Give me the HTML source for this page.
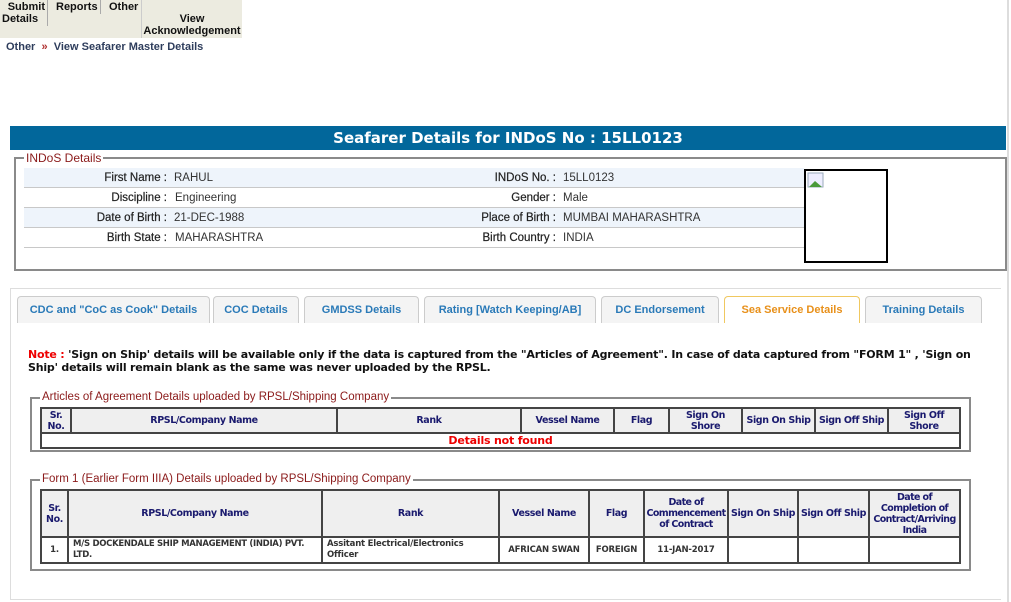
<!DOCTYPE html>
<html><head><meta charset="utf-8"><style>
*{box-sizing:border-box;margin:0;padding:0}
body{width:1011px;height:602px;background:#fff;position:relative;overflow:hidden;font-family:"Liberation Sans",Arial,sans-serif}
.a{position:absolute}
.menu{left:0;top:0;width:242px;height:38px;background:#ecebe0}
.mi{position:absolute;font:bold 11px "Liberation Sans",Arial,sans-serif;color:#111;line-height:12px;text-align:center;white-space:nowrap}
.sep{position:absolute;width:1px;background:#aaa}
.bc{left:6px;top:41px;font:bold 11px "Liberation Sans",Arial,sans-serif;color:#2e3d5c}
.hdr{left:10px;top:126px;width:996px;height:24px;background:#02679b;color:#fff;font:bold 15px "DejaVu Sans",Verdana,sans-serif;text-align:center;line-height:24px}
.fs{border:2px solid #8a8a8a}
.lg{position:absolute;background:#fff;color:#8b1a1a;font:12px "Liberation Sans",Arial,sans-serif;padding:0 2px;line-height:13px}
.row{position:absolute;left:24px;width:780px;height:20px;border-bottom:1px solid #c8c8c8;font:11.5px "Liberation Sans",Arial,sans-serif;color:#333;line-height:20px}
.row span{position:absolute;white-space:nowrap}
.row span.k{color:#222;-webkit-text-stroke:0.2px #222}
.tab{position:absolute;top:296px;height:27px;background:#f4f4f4;border:1px solid #ccc;border-bottom:none;border-radius:4px 4px 0 0;color:#2a7ab8;font:bold 11px "Liberation Sans",Arial,sans-serif;text-align:center;line-height:27px;white-space:nowrap}
table{position:absolute;border-collapse:collapse;table-layout:fixed;border:2px solid #444;font-family:"DejaVu Sans",Verdana,sans-serif}
th,td{border:2px solid #444;padding:0;text-align:center;overflow:hidden}
th{background:#efefef;color:#1a1a6e;font-size:9.5px;font-weight:bold;line-height:11px;letter-spacing:-0.4px}
td{font-size:8.5px;font-weight:bold;color:#333;line-height:11px;letter-spacing:-0.2px}
</style></head><body>
<div class="a menu"></div>
<div class="mi" style="left:0;top:1px;width:45px;text-align:right">Submit</div>
<div class="mi" style="left:2px;top:13px;text-align:left">Details</div>
<div class="sep" style="left:47px;top:0;height:26px"></div>
<div class="mi" style="left:56px;top:1px">Reports</div>
<div class="sep" style="left:100px;top:0;height:14px"></div>
<div class="mi" style="left:109px;top:1px">Other</div>
<div class="sep" style="left:141px;top:0;height:38px;background:#ccc"></div>
<div class="mi" style="left:142px;top:13px;width:100px">View<br>Acknowledgement</div>
<div class="a bc">Other <span style="color:#b03030">&nbsp;»&nbsp;</span> View Seafarer Master Details</div>
<div class="a" style="left:1007px;top:0;width:2px;height:602px;background:#ddd"></div>

<div class="a hdr">Seafarer Details for INDoS No : 15LL0123</div>

<div class="a fs" style="left:14px;top:157px;width:993px;height:114px"></div>
<div class="lg" style="left:24px;top:152px">INDoS Details</div>
<div class="row" style="top:168px;background:#eef4fb"><span class="k" style="right:637px">First Name :</span><span style="left:150px">RAHUL</span><span class="k" style="right:248px">INDoS No. :</span><span style="left:539px">15LL0123</span></div>
<div class="row" style="top:188px"><span class="k" style="right:637px">Discipline :</span><span style="left:151px">Engineering</span><span class="k" style="right:248px">Gender :</span><span style="left:539px">Male</span></div>
<div class="row" style="top:208px;background:#eef4fb"><span class="k" style="right:637px">Date of Birth :</span><span style="left:150px">21-DEC-1988</span><span class="k" style="right:248px">Place of Birth :</span><span style="left:539px">MUMBAI MAHARASHTRA</span></div>
<div class="row" style="top:228px"><span class="k" style="right:637px">Birth State :</span><span style="left:151px">MAHARASHTRA</span><span class="k" style="right:248px">Birth Country :</span><span style="left:539px">INDIA</span></div>
<div class="a" style="left:804px;top:169px;width:84px;height:94px;border:2px solid #000;background:#fff"></div>
<svg class="a" style="left:807px;top:172px" width="18" height="17"><rect x="1" y="1" width="15" height="14" fill="#eef" stroke="#9ab"/><path d="M2 15 L8 9 L15 15Z" fill="#4a9a3a"/></svg>

<div class="a" style="left:10px;top:288px;width:991px;height:312px;border:1px solid #ddd;border-right:none"></div>
<div class="tab" style="left:17px;width:193px">CDC and "CoC as Cook" Details</div>
<div class="tab" style="left:213px;width:86px">COC Details</div>
<div class="tab" style="left:304px;width:115px">GMDSS Details</div>
<div class="tab" style="left:424px;width:172px">Rating [Watch Keeping/AB]</div>
<div class="tab" style="left:601px;width:118px">DC Endorsement</div>
<div class="tab" style="left:724px;width:136px;background:#fff;border-color:#f0c860;color:#e8901a">Sea Service Details</div>
<div class="tab" style="left:865px;width:117px">Training Details</div>

<div class="a" style="left:28px;top:348px;width:960px;font:bold 11px 'DejaVu Sans',Verdana,sans-serif;color:#111;line-height:13px;letter-spacing:-0.2px"><span style="color:#e00">Note : </span>'Sign on Ship' details will be available only if the data is captured from the "Articles of Agreement". In case of data captured from "FORM 1" , 'Sign on Ship' details will remain blank as the same was never uploaded by the RPSL.</div>

<div class="a fs" style="left:30px;top:397px;width:941px;height:55px"></div>
<div class="lg" style="left:40px;top:391px;font-size:11.5px">Articles of Agreement Details uploaded by RPSL/Shipping Company</div>
<table style="left:40px;top:407px;width:921px">
<colgroup><col style="width:30px"><col style="width:266px"><col style="width:184px"><col style="width:93px"><col style="width:55px"><col style="width:73px"><col style="width:73px"><col style="width:73px"><col></colgroup>
<tr style="height:25px"><th>Sr.<br>No.</th><th>RPSL/Company Name</th><th>Rank</th><th>Vessel Name</th><th>Flag</th><th>Sign On<br>Shore</th><th style="white-space:nowrap">Sign On Ship</th><th style="white-space:nowrap">Sign Off Ship</th><th>Sign Off<br>Shore</th></tr>
<tr style="height:15px"><td colspan="9" style="color:#e00;font-size:11px;line-height:13px">Details not found</td></tr>
</table>

<div class="a fs" style="left:30px;top:479px;width:941px;height:92px"></div>
<div class="lg" style="left:40px;top:473px;font-size:11.5px">Form 1 (Earlier Form IIIA) Details uploaded by RPSL/Shipping Company</div>
<table style="left:40px;top:489px;width:921px">
<colgroup><col style="width:27px"><col style="width:254px"><col style="width:177px"><col style="width:90px"><col style="width:55px"><col style="width:84px"><col style="width:70px"><col style="width:71px"><col></colgroup>
<tr style="height:47px"><th>Sr.<br>No.</th><th>RPSL/Company Name</th><th>Rank</th><th>Vessel Name</th><th>Flag</th><th style="letter-spacing:-0.6px">Date of<br>Commencement<br>of Contract</th><th style="white-space:nowrap">Sign On Ship</th><th style="white-space:nowrap">Sign Off Ship</th><th style="letter-spacing:-0.6px">Date of<br>Completion of<br>Contract/Arriving<br>India</th></tr>
<tr style="height:26px"><td>1.</td><td style="text-align:left;padding-left:4px;letter-spacing:-0.3px">M/S DOCKENDALE SHIP MANAGEMENT (INDIA) PVT.<br>LTD.</td><td style="text-align:left;padding-left:4px">Assitant Electrical/Electronics<br>Officer</td><td>AFRICAN SWAN</td><td>FOREIGN</td><td>11-JAN-2017</td><td></td><td></td><td></td></tr>
</table>
</body></html>
